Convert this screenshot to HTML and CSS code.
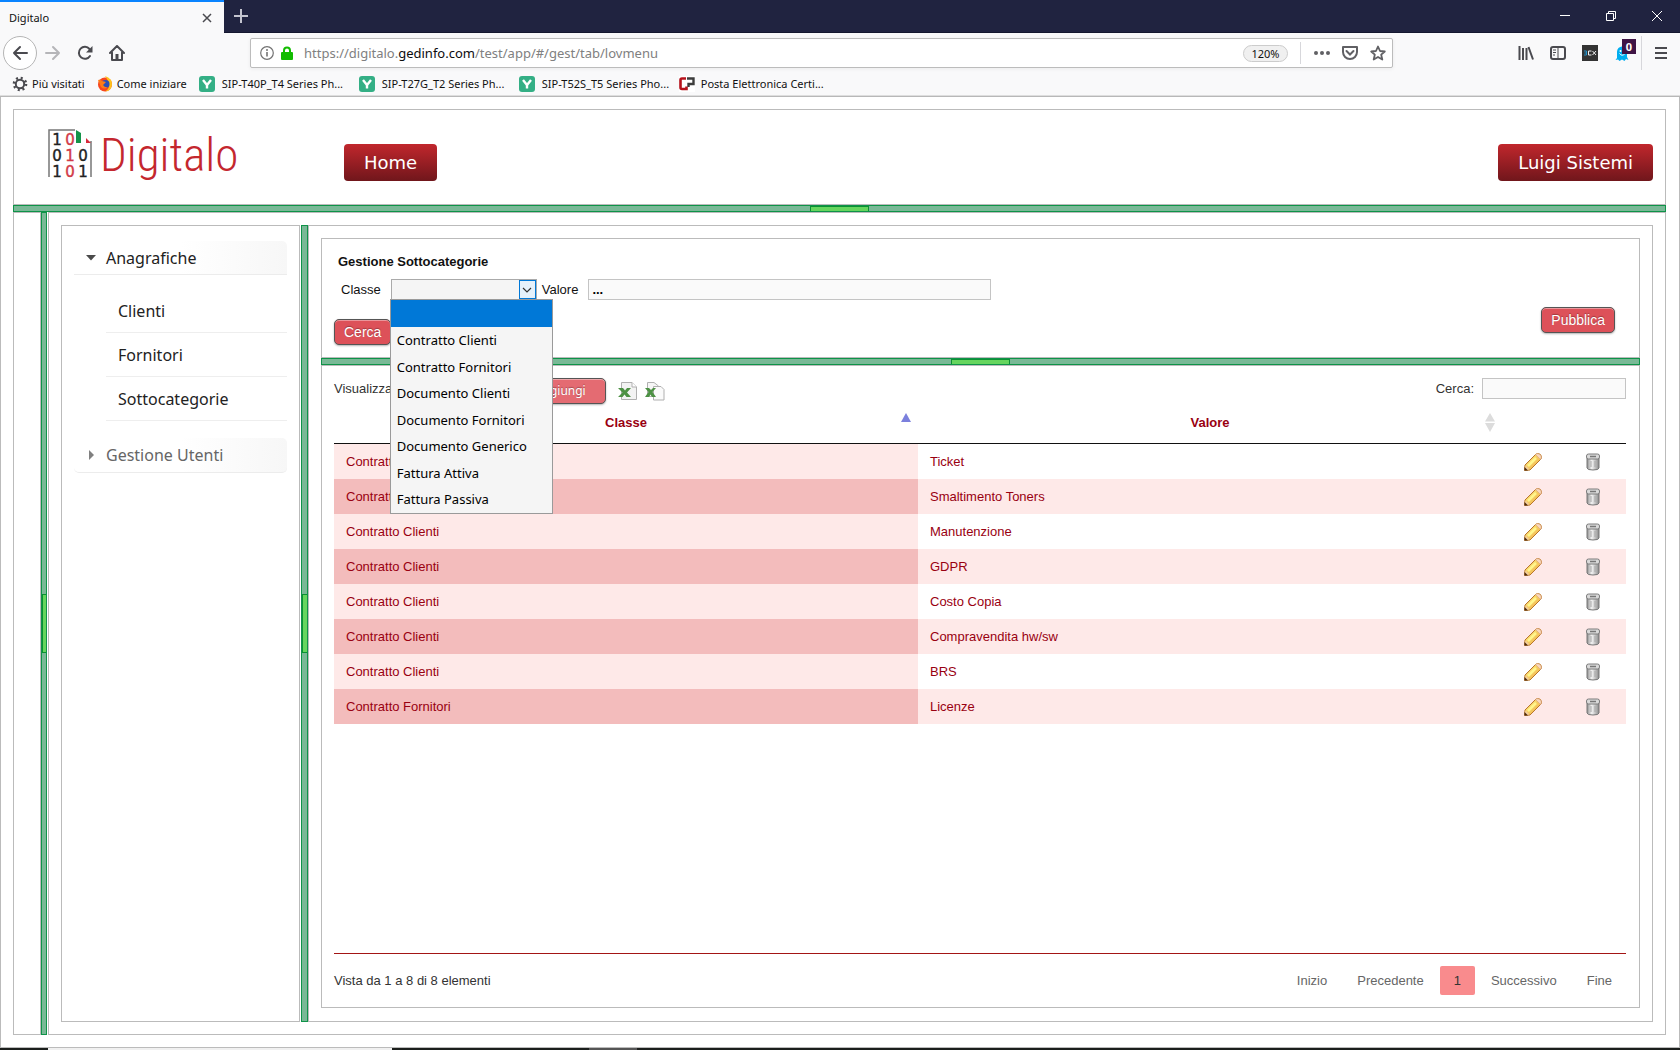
FILE: index.html
```html
<!DOCTYPE html>
<html lang="it">
<head>
<meta charset="utf-8">
<title>Digitalo</title>
<link rel="stylesheet" href="styles.css">
</head>
<body>
<svg width="0" height="0" class="defs" aria-hidden="true">
  <defs>
    <linearGradient id="gold" x1="0" y1="0" x2="1" y2="1"><stop offset="0" stop-color="#fff38a"/><stop offset="1" stop-color="#eda53c"/></linearGradient>
    <linearGradient id="steel" x1="0" x2="1"><stop offset="0" stop-color="#8d8d8d"/><stop offset=".4" stop-color="#f4f4f4"/><stop offset="1" stop-color="#8a8a8a"/></linearGradient>
    <symbol id="pencil" viewBox="0 0 18 18">
      <path d="M1 12 12 1Q14.500 0 16.500 1.500 18 3.500 17 6L6 17 .5 17.500Z" fill="url(#gold)" stroke="#b9762c"/>
      <path d="M1.500 12.500 5.500 16.500 1 17Z" fill="#f2cf9d"/><path d="M.5 14 4 17.500H.5Z" fill="#4a2a10"/>
      <path d="M11.500 1.500 16.500 6.500 17.200 4.500Q17.500 3 16 1.500 14 .3 12.500.8Z" fill="#f9d8bd" stroke="#d9a27a" stroke-width=".6"/>
      <path d="M4 13 12 5" stroke="#fff68c" stroke-width="2.500"/>
    </symbol>
    <symbol id="trash" viewBox="0 0 14 18">
      <path d="M1 4.500V15Q1 17 7 17T13 15V4.500Z" fill="url(#steel)" stroke="#777"/>
      <rect x=".5" y="1" width="13" height="5" rx="2" fill="#d9d9d9" stroke="#7d7d7d"/>
      <path d="M4 3.500H10" stroke="#777" stroke-width="1.500"/><path d="M5 8V14M9 8V14" stroke="#a8a8a8"/>
    </symbol>
    <symbol id="yealink" viewBox="0 0 16 16"><rect width="16" height="16" rx="3" fill="#34af85"/><path d="M4 4 8 9 12 4M8 9V12.500" fill="none" stroke="#fff" stroke-width="2.400"/></symbol>
  </defs>
</svg>

<header class="browser">
  <div class="tabstrip">
    <div class="tab"><span>Digitalo</span>
      <button class="tab-close" aria-label="Chiudi scheda"><svg width="10" height="10" viewBox="0 0 10 10"><path d="M1 1 9 9M9 1 1 9" stroke="#4a4a4f" stroke-width="1.500"/></svg></button>
    </div>
    <button class="newtab" aria-label="Nuova scheda"><svg width="14" height="14" viewBox="0 0 14 14"><path d="M7 0V14M0 7H14" stroke="#c3c4cf" stroke-width="2"/></svg></button>
    <div class="winbtns">
      <button aria-label="Riduci"><svg width="10" height="10" viewBox="0 0 10 10"><path d="M0 4.500H10" stroke="#fff"/></svg></button>
      <button aria-label="Ripristina"><svg width="10" height="10" viewBox="0 0 10 10"><path d="M.5 2.500H7.500V9.500H.5ZM2.500 2.500V.5H9.500V7.500H7.500" fill="none" stroke="#fff"/></svg></button>
      <button aria-label="Chiudi"><svg width="10" height="10" viewBox="0 0 10 10"><path d="M0 0 10 10M10 0 0 10" stroke="#fff"/></svg></button>
    </div>
  </div>
  <div class="navbar">
    <button class="back" aria-label="Indietro"><svg width="16" height="16" viewBox="0 0 16 16"><path d="M15 8H2M8 2 2 8 8 14" fill="none" stroke="#4a4a4f" stroke-width="2" stroke-linecap="round" stroke-linejoin="round"/></svg></button>
    <button class="tool" aria-label="Avanti"><svg width="16" height="16" viewBox="0 0 16 16"><path d="M1 8H14M8 2 14 8 8 14" fill="none" stroke="#b5b5b8" stroke-width="2" stroke-linecap="round" stroke-linejoin="round"/></svg></button>
    <button class="tool" aria-label="Ricarica"><svg width="16" height="16" viewBox="0 0 16 16"><path d="M13 11A6 6 0 1 1 12.500 4" fill="none" stroke="#4a4a4f" stroke-width="2" stroke-linecap="round"/><path d="M15.500 1V7.500H9Z" fill="#4a4a4f"/></svg></button>
    <button class="tool" aria-label="Pagina iniziale"><svg width="16" height="16" viewBox="0 0 16 16"><path d="M1 8 8 1 15 8M3 7.500V15H13V7.500" fill="none" stroke="#4a4a4f" stroke-width="2" stroke-linecap="round" stroke-linejoin="round"/><path d="M6.500 9H9.500V15H6.500Z" fill="#4a4a4f"/></svg></button>
    <div class="urlbar">
      <svg width="14" height="14" viewBox="0 0 14 14"><circle cx="7" cy="7" r="6.300" fill="none" stroke="#737373" stroke-width="1.200"/><path d="M7 6V10.500" stroke="#737373" stroke-width="1.600"/><circle cx="7" cy="3.900" r="1" fill="#737373"/></svg>
      <svg width="12" height="14" viewBox="0 0 12 14"><rect y="6" width="12" height="8" rx="1" fill="#12bc00"/><path d="M3 7V4.500A3 3 0 0 1 9 4.500V7" fill="none" stroke="#12bc00" stroke-width="2"/></svg>
      <span class="url">https://digitalo.<b>gedinfo.com</b>/test/app/#/gest/tab/lovmenu</span>
      <span class="zoom">120%</span>
      <span class="urlsep"></span>
      <div class="urltools">
        <button aria-label="Azioni"><svg width="16" height="16" viewBox="0 0 16 16"><circle cx="2" cy="8" r="2" fill="#606064"/><circle cx="8" cy="8" r="2" fill="#606064"/><circle cx="14" cy="8" r="2" fill="#606064"/></svg></button>
        <button aria-label="Pocket"><svg width="16" height="16" viewBox="0 0 16 16"><path d="M1 2H15V7A7 7 0 0 1 1 7Z" fill="none" stroke="#606064" stroke-width="2" stroke-linejoin="round"/><path d="M4.500 6 8 9.500 11.500 6" fill="none" stroke="#606064" stroke-width="2" stroke-linecap="round"/></svg></button>
        <button aria-label="Segnalibro"><svg width="16" height="16" viewBox="0 0 16 16"><path d="M8 1.500 10 6 14.800 6.500 11.200 9.700 12.300 14.500 8 12 3.700 14.500 4.800 9.700 1.200 6.500 6 6Z" fill="none" stroke="#606064" stroke-width="1.800" stroke-linejoin="round"/></svg></button>
      </div>
    </div>
    <button class="tool" aria-label="Libreria"><svg width="16" height="16" viewBox="0 0 16 16"><path d="M1.500 1V15M5 3V15M8.500 3V15M10.500 2 15 14.500" stroke="#4a4a4f" stroke-width="2"/></svg></button>
    <button class="tool" aria-label="Barra laterale"><svg width="16" height="16" viewBox="0 0 16 16"><rect x="1" y="2" width="14" height="12" rx="2" fill="none" stroke="#4a4a4f" stroke-width="2"/><path d="M8 2V14M3 5H6M3 7.500H6M3 10H5" stroke="#4a4a4f"/></svg></button>
    <button class="tool" aria-label="3CX"><svg width="16" height="16" viewBox="0 0 16 16"><rect width="16" height="16" fill="#333"/><path d="M2 6H4.500V10H2M2.500 8H4.500" fill="none" stroke="#2492c8"/><path d="M9.500 6H6.500V10H9.500M10.500 6 14 10M14 6 10.500 10" fill="none" stroke="#eee"/></svg></button>
    <button class="tool ghost" aria-label="Ghostery"><svg width="14" height="16" viewBox="0 0 14 16"><path d="M2 13V7A5 5.500 0 0 1 12 7V12L13.500 15 11 14 9.500 16 7 14.500 4.500 16 3 14.500 .5 15Z" fill="#00aef0"/><circle cx="5.500" cy="6" r="1" fill="#fff"/><circle cx="9" cy="6" r="1" fill="#fff"/><path d="M4.500 8.500Q7 12 10 8.500" fill="none" stroke="#fff"/></svg><span class="count">0</span></button>
    <span class="navsep"></span>
    <button class="tool" aria-label="Menu"><svg width="12" height="14" viewBox="0 0 12 14"><path d="M0 2H12M0 7H12M0 12H12" stroke="#4a4a4f" stroke-width="2"/></svg></button>
  </div>
  <nav class="bookmarks">
    <a href="#"><svg width="16" height="16" viewBox="0 0 16 16"><circle cx="8" cy="8" r="4.200" fill="none" stroke="#4a4a4f" stroke-width="2"/><circle cx="8" cy="8" r="6" fill="none" stroke="#4a4a4f" stroke-width="2.600" stroke-dasharray="2 2.712"/></svg>Più visitati</a>
    <a href="#"><svg width="16" height="16" viewBox="0 0 16 16"><circle cx="8" cy="8.500" r="7" fill="#f7471e"/><path d="M8 0Q15.500 2.500 15 9 14 15 8 15.500 13 13 12 8 11 4 8 0Z" fill="#ffc21c"/><circle cx="8.500" cy="8" r="4" fill="#2b4fb5"/><path d="M1 4Q3 3 5 5L9 6 6 9Q8 12 11 11 7 14 4 11Z" fill="#ff7b16"/></svg>Come iniziare</a>
    <a href="#" class="long"><svg width="16" height="16"><use href="#yealink"/></svg>SIP-T40P_T4 Series Ph...</a>
    <a href="#" class="long"><svg width="16" height="16"><use href="#yealink"/></svg>SIP-T27G_T2 Series Ph...</a>
    <a href="#" class="long"><svg width="16" height="16"><use href="#yealink"/></svg>SIP-T52S_T5 Series Pho...</a>
    <a href="#"><svg width="16" height="16" viewBox="0 0 16 16"><rect width="16" height="16" fill="#fff"/><path d="M7 2.500H3Q1.500 2.500 1.500 4V11.500Q1.500 13 3 13H7.500V10.500" fill="none" stroke="#b5121b" stroke-width="2.600"/><path d="M8 2.500H14.500V8H9.500V11" fill="none" stroke="#3c3c3c" stroke-width="2.400"/></svg>Posta Elettronica Certi...</a>
  </nav>
</header>

<main class="app">
  <header class="pane apphead">
    <a href="#" class="logo" aria-label="Digitalo">
      <svg width="44" height="54" viewBox="0 0 44 54">
        <path d="M1 48V1H27M43 12V48" fill="none" stroke="#777" stroke-width="1.500"/>
        <path d="M28 1 33 4V14H28Z" fill="#14934a"/><path d="M38 9 43 14H38Z" fill="#d6293a"/>
        <g font-family="DejaVu Sans" font-size="15" text-anchor="middle" stroke-width=".4">
          <g fill="#222" stroke="#222"><text x="9" y="16">1</text><text x="9" y="32">0</text><text x="9" y="48">1</text><text x="35" y="32">0</text><text x="35" y="48">1</text></g>
          <g fill="#d23a48" stroke="#d23a48"><text x="22" y="16">0</text><text x="22" y="32">1</text><text x="22" y="48">0</text></g>
        </g>
      </svg>
      <span>Digitalo</span>
    </a>
    <button class="headbtn">Home</button>
    <button class="headbtn user">Luigi Sistemi</button>
  </header>
  <div class="split-h"><span></span></div>
  <div class="cols">
    <div class="pane west"></div>
    <div class="split-v outer"><span></span></div>
    <div class="pane center cols">
      <nav class="pane sidebar">
        <button class="group open"><svg width="10" height="6" viewBox="0 0 10 6"><path d="M0 0H10L5 5.500Z" fill="#4a4a4a"/></svg>Anagrafiche</button>
        <ul>
          <li><a href="#">Clienti</a></li>
          <li><a href="#">Fornitori</a></li>
          <li><a href="#">Sottocategorie</a></li>
        </ul>
        <button class="group"><svg width="10" height="10" viewBox="0 0 10 10"><path d="M3 0V10L8 5Z" fill="#808080"/></svg>Gestione Utenti</button>
      </nav>
      <div class="split-v"><span></span></div>
      <div class="pane content">
        <section class="pane north">
          <h1>Gestione Sottocategorie</h1>
          <div class="filters">
            <label for="classe">Classe</label>
            <div class="combo">
              <select id="classe"><option></option><option>Contratto Clienti</option></select>
              <span class="arrow"><svg width="10" height="6" viewBox="0 0 10 6"><path d="M1 1 5 5 9 1" fill="none" stroke="#333" stroke-width="1.200"/></svg></span>
              <ul class="popup" role="listbox" aria-label="Classe">
                <li role="option" aria-selected="true"></li>
                <li role="option">Contratto Clienti</li>
                <li role="option">Contratto Fornitori</li>
                <li role="option">Documento Clienti</li>
                <li role="option">Documento Fornitori</li>
                <li role="option">Documento Generico</li>
                <li role="option">Fattura Attiva</li>
                <li role="option">Fattura Passiva</li>
              </ul>
            </div>
            <label for="valore">Valore</label>
            <input id="valore" type="text" value="...">
          </div>
          <div class="actions"><button class="btn">Cerca</button><button class="btn publish">Pubblica</button></div>
        </section>
        <div class="split-h"><span></span></div>
        <section class="pane south">
          <div class="toolbar">
            <label for="len">Visualizza</label>
            <select id="len"><option>25</option></select>
            <button class="btn add">Aggiungi</button>
            <a href="#" aria-label="Excel"><svg width="20" height="20" viewBox="0 0 20 20"><path d="M3.500 1.500H14L18.500 6V18.500H3.500Z" fill="#f3f3f3" stroke="#b0b0b0"/><path d="M14 1.500V6H18.500" fill="#fff" stroke="#b0b0b0"/><path d="M0 7H5L7 9.500 9 7H13L9 11.500 13 16H8.500L6.500 13.500 4.500 16H0L4.500 11.500Z" fill="#4d9144"/></svg></a>
            <a href="#" aria-label="Excel tutto"><svg width="20" height="20" viewBox="0 0 20 20"><path d="M2.500 1.500H9L13.500 5V15.500H2.500Z" fill="#f6f6f6" stroke="#b0b0b0"/><path d="M8.500 5.500H16L19 8.500V19H8.500Z" fill="#fafafa" stroke="#b0b0b0"/><path d="M0 7H4L6 9 8 7H11L7.500 11 11 16H7L5.500 13.500 4 16H0L3.500 11Z" fill="#4d9144"/></svg></a>
            <label class="search" for="cerca">Cerca:</label>
            <input id="cerca" type="text">
          </div>
          <table>
            <colgroup><col><col><col class="ic"><col class="ic"></colgroup>
            <thead><tr>
              <th><div>Classe<svg width="10" height="19" viewBox="0 0 10 19"><path d="M0 9 5 0 10 9Z" fill="#7b80dd"/></svg></div></th>
              <th><div>Valore<svg width="10" height="19" viewBox="0 0 10 19"><path d="M0 8.500 5 0 10 8.500ZM0 10 5 19 10 10Z" fill="#dcdcdc"/></svg></div></th>
              <th></th><th></th></tr></thead>
            <tbody>
              <tr><td>Contratto Clienti</td><td>Ticket</td><td><svg width="18" height="18"><use href="#pencil"/></svg></td><td><svg width="14" height="18"><use href="#trash"/></svg></td></tr>
              <tr><td>Contratto Clienti</td><td>Smaltimento Toners</td><td><svg width="18" height="18"><use href="#pencil"/></svg></td><td><svg width="14" height="18"><use href="#trash"/></svg></td></tr>
              <tr><td>Contratto Clienti</td><td>Manutenzione</td><td><svg width="18" height="18"><use href="#pencil"/></svg></td><td><svg width="14" height="18"><use href="#trash"/></svg></td></tr>
              <tr><td>Contratto Clienti</td><td>GDPR</td><td><svg width="18" height="18"><use href="#pencil"/></svg></td><td><svg width="14" height="18"><use href="#trash"/></svg></td></tr>
              <tr><td>Contratto Clienti</td><td>Costo Copia</td><td><svg width="18" height="18"><use href="#pencil"/></svg></td><td><svg width="14" height="18"><use href="#trash"/></svg></td></tr>
              <tr><td>Contratto Clienti</td><td>Compravendita hw/sw</td><td><svg width="18" height="18"><use href="#pencil"/></svg></td><td><svg width="14" height="18"><use href="#trash"/></svg></td></tr>
              <tr><td>Contratto Clienti</td><td>BRS</td><td><svg width="18" height="18"><use href="#pencil"/></svg></td><td><svg width="14" height="18"><use href="#trash"/></svg></td></tr>
              <tr><td>Contratto Fornitori</td><td>Licenze</td><td><svg width="18" height="18"><use href="#pencil"/></svg></td><td><svg width="14" height="18"><use href="#trash"/></svg></td></tr>
            </tbody>
          </table>
          <footer class="pager">
            <span>Vista da 1 a 8 di 8 elementi</span>
            <nav><a href="#">Inizio</a><a href="#">Precedente</a><a href="#" class="current">1</a><a href="#">Successivo</a><a href="#">Fine</a></nav>
          </footer>
        </section>
      </div>
    </div>
  </div>
</main>
<div class="taskbar"><span class="task"></span><span class="task active"></span></div>
</body>
</html>
```
FILE: styles.css
```css
* { box-sizing: border-box; }
body { margin: 0; min-height: 100vh; display: flex; flex-direction: column; background: #fff; font: 13px/18px "Liberation Sans", Arial, sans-serif; color: #111; }
svg { display: block; flex: none; }
.defs { position: absolute; }
button { border: 0; padding: 0; background: none; font: inherit; color: inherit; }
a { color: inherit; text-decoration: none; }
ul { list-style: none; margin: 0; padding: 0; }

/* browser window */
.browser { background: #f9f9fa; font: 11px/16px "Noto Sans", sans-serif; border-bottom: 1px solid #b8b8b8; height: 97px; flex: none; }
.tabstrip { display: flex; height: 33px; background: #202340; border-bottom: 1px solid #14172f; }
.tab { display: flex; align-items: center; justify-content: space-between; width: 224px; height: 33px; padding: 0 12px 0 9px; background: #f9f9fa; border-top: 2px solid #0a84ff; }
.newtab { width: 34px; display: grid; place-items: center; }
.winbtns { display: flex; margin-left: auto; }
.winbtns button { width: 46px; display: grid; place-items: center; }
.navbar { display: flex; align-items: center; padding: 0 3px; height: 40px; }
.back { width: 34px; height: 34px; border: 1px solid #b5b5b5; border-radius: 50%; background: #fff; display: grid; place-items: center; }
.tool { width: 32px; height: 32px; display: grid; place-items: center; }
.urlbar { flex: 1; display: flex; align-items: center; gap: 7px; margin: 0 117px; height: 30px; padding: 0 0 0 9px; background: #fff; border: 1px solid #bcbcbc; border-radius: 2px; box-shadow: 0 1px 4px rgba(0,0,0,.06); }
.url { flex: 1; margin-left: 4px; font-size: 13px; color: #808080; white-space: nowrap; overflow: hidden; }
.url b { font-weight: 400; color: #0c0c0d; }
.zoom { width: 45px; height: 17px; border: 1px solid #ccc; border-radius: 9px; background: #f0f0f0; text-align: center; line-height: 15px; }
.urlsep { width: 1px; height: 22px; margin-left: 5px; background: #d7d7db; }
.urltools { display: flex; }
.urltools button { width: 28px; height: 28px; display: grid; place-items: center; }
.ghost { position: relative; }
.count { position: absolute; right: 2px; top: 2px; width: 14px; height: 15px; background: #3f1445; color: #fff; font-weight: 700; line-height: 15px; }
.navsep { width: 1px; height: 34px; margin: 0 3px; background: #d7d7db; }
.bookmarks { display: flex; gap: 12px; height: 23px; align-items: center; padding: 0 0 0 12px; border-bottom: 1px solid #dedede; }
.bookmarks a { display: flex; gap: 4px; align-items: center; white-space: nowrap; }
.bookmarks .long { width: 148px; gap: 7px; }
.bookmarks .long + a:last-child { gap: 6px; }

/* layout panes */
.app { flex: 1; display: flex; flex-direction: column; padding: 12px 13px 12px 12px; border: 1px solid #bbb; border-top: 0; }
.pane { border: 1px solid #bbb; }
.cols { flex: 1; display: flex; min-width: 0; }
.split-h { height: 7px; flex: none; display: flex; justify-content: center; background: #79b996; border: 1px solid #0e9348; }
.split-h span { width: 59px; background: #66d55e; border: 1px solid #0b9033; border-bottom: 0; }
.split-v { width: 7px; flex: none; display: flex; flex-direction: column; justify-content: center; margin-left: 1px; background: #79b996; border: 1px solid #0e9348; }
.split-v span { height: 59px; background: #66d55e; border: 1px solid #0b9033; border-right: 0; }
.split-v.outer { width: 6px; margin: 0 1px 0 0; }
.west { width: 28px; flex: none; }
.center { padding: 12px; }
.content { flex: 1; display: flex; flex-direction: column; padding: 12px 12px 13px; min-width: 0; }

/* header */
.apphead { display: flex; align-items: center; height: 96px; flex: none; padding: 19px 12px 9px 34px; }
.logo { display: flex; align-items: flex-start; align-self: flex-start; gap: 8px; width: 296px; }
.logo span { font: 300 47px/52px "Roboto Condensed", Roboto, sans-serif; color: #c4272e; }
.headbtn { height: 37px; padding: 0 20px; border-radius: 4px; background: linear-gradient(#c1272d, #70161b); color: #fff; font: 18px/37px "DejaVu Sans", Verdana, sans-serif; }
.user { margin-left: auto; }

/* sidebar */
.sidebar { width: 239px; flex: none; padding: 15px 12px; font: 16px/24px "Noto Sans", sans-serif; color: #222; }
.sidebar ul { margin: 14px 0 17px 32px; }
.sidebar li { height: 44px; padding: 10px 12px 0; border-bottom: 1px solid #eee; }
.group { display: flex; align-items: center; gap: 10px; width: 100%; height: 35px; padding-left: 12px; border-bottom: 1px solid #ececec; border-radius: 5px; background: linear-gradient(90deg, #fff 50%, #f7f7f7); color: #666; }
.group.open { height: 34px; border-radius: 0 5px 0 0; color: #222; }

/* search form */
input { height: 21px; border: 1px solid #c4c4c4; background: #fafafa; font: inherit; padding: 0 3px; }
.north { flex: none; height: 120px; padding: 14px 12px 0; }
.north h1 { margin: 0 0 8px 4px; font-size: 13px; line-height: 18px; }
.filters { display: flex; align-items: center; padding-left: 7px; }
.filters label { margin-right: 10px; }
.filters input { width: 403px; font-weight: 700; }
.combo { position: relative; width: 146px; height: 21px; margin-right: 5px; }
.combo select { width: 100%; height: 21px; appearance: none; border: 1px solid #aaa; border-radius: 0; background: #f5f5f5; }
.arrow { position: absolute; right: 1px; top: 1px; width: 17px; height: 19px; display: grid; place-items: center; border: 1px solid #0078d7; background: #e5f1fb; pointer-events: none; }
.popup { position: absolute; left: -1px; top: 20px; z-index: 2; width: 163px; height: 215px; display: grid; grid-template-rows: 27px repeat(7, 1fr); border: 1px solid #9a9a9a; background: #f5f5f5; font: 13px/26px "Noto Sans", sans-serif; color: #000; }
.popup li { padding-left: 6px; }
.popup li[aria-selected] { background: #0078d7; }
.actions { display: flex; justify-content: space-between; height: 38px; margin-top: 7px; padding-right: 12px; }
.btn { height: 26px; padding: 0 9px; border: 1px solid #555; border-radius: 5px; background: #dd5159; box-shadow: inset 0 1px 0 rgba(255,255,255,.4), 0 1px 2px rgba(0,0,0,.3); color: #fff; font-size: 14px; text-shadow: 0 -1px 1px rgba(0,0,0,.3); }
.actions .btn { align-self: flex-end; }
.actions .publish { align-self: flex-start; }

/* table */
.south { flex: 1; display: flex; flex-direction: column; padding: 12px 13px 12px 12px; color: #333; }
.toolbar { display: flex; align-items: flex-start; gap: 9px; height: 26px; }
.toolbar label { line-height: 22px; }
.toolbar select { width: 80px; height: 21px; }
.toolbar .add { width: 92px; margin-left: 24px; margin-right: 3px; background: #e46b72; font: 12px/18px "Noto Sans", sans-serif; }
.toolbar a { margin: 3px -2px 0 0; }
.search { margin-left: auto; }
.toolbar input { width: 144px; margin-left: -1px; }
table { width: 100%; table-layout: fixed; border-collapse: separate; border-spacing: 0; color: #990011; }
.ic { width: 62px; }
th { height: 40px; padding: 0 7px; border-bottom: 1px solid #111; font-weight: 700; }
th div { display: grid; grid-template-columns: 1fr auto 1fr; align-items: center; padding-bottom: 2px; }
th div::before { content: ""; }
th svg { justify-self: end; }
td { height: 35px; padding: 0 12px; }
td:nth-child(n+3) { padding: 0; }
td:last-child { padding-right: 4px; }
td svg { margin: auto; }
tr:nth-child(odd) td:first-child, tr:nth-child(even) td { background: #fee9e8; }
tbody tr:nth-child(even) td:first-child { background: #f3bcbc; }
.pager { display: flex; justify-content: space-between; align-items: center; margin-top: auto; padding-top: 12px; border-top: 1px solid #a31515; }
.pager nav { display: flex; gap: 2px; color: #666; }
.pager a { padding: 6px 14px 5px; border-radius: 2px; }
.pager .current { background: #f98b8d; color: #333; }

.taskbar { display: flex; height: 2px; flex: none; background: #1b1e1c; }
.task { width: 344px; margin-left: 48px; background: #f0f0f0; }
.task.active { width: 48px; margin-left: 197px; background: #555; }
```
